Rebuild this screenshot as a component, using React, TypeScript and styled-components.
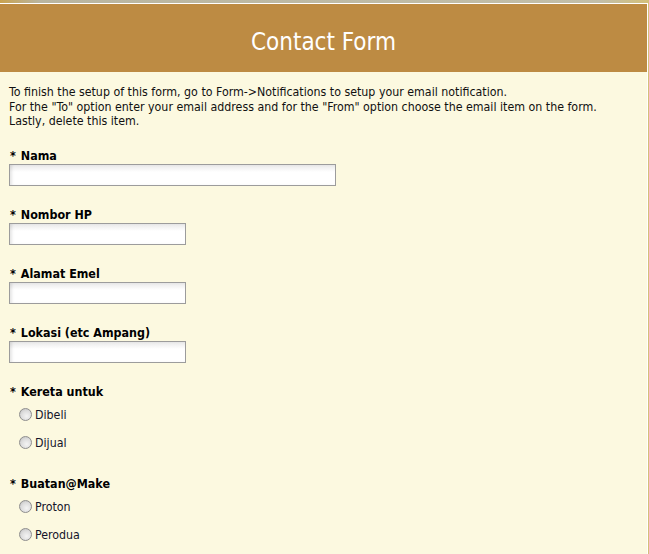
import styled, { createGlobalStyle } from "styled-components";

const GlobalStyle = createGlobalStyle`
  html, body {
    margin: 0;
    padding: 0;
    background: #c7c3ae;
  }
  body {
    font-family: "DejaVu Sans Condensed", "Liberation Sans", sans-serif;
    color: #111;
  }
`;

type Field = { label: string; wide?: boolean };

const textFields: Field[] = [
  { label: "Nama", wide: true },
  { label: "Nombor HP" },
  { label: "Alamat Emel" },
  { label: "Lokasi (etc Ampang)" },
];

const choiceFields = [
  { label: "Kereta untuk", name: "kereta", options: ["Dibeli", "Dijual"] },
  { label: "Buatan@Make", name: "buatan", options: ["Proton", "Perodua"] },
];

function App() {
  return (
    <>
      <GlobalStyle />
      <Window>
        <Frame>
          <Header>Contact Form</Header>
          <Content>
            <Intro>
              To finish the setup of this form, go to Form-&gt;Notifications to setup your email notification.
              <br />
              For the "To" option enter your email address and for the "From" option choose the email item on the form.
              <br />
              Lastly, delete this item.
            </Intro>
            {textFields.map((f) => (
              <FieldBlock key={f.label}>
                <Label>
                  <Star>*</Star>
                  {f.label}
                </Label>
                <TextInput type="text" $wide={f.wide} />
              </FieldBlock>
            ))}
            {choiceFields.map((f) => (
              <FieldBlock key={f.name} $gap={20}>
                <Label>
                  <Star>*</Star>
                  {f.label}
                </Label>
                <Options>
                  {f.options.map((o) => (
                    <Option key={o}>
                      <Radio type="radio" name={f.name} />
                      {o}
                    </Option>
                  ))}
                </Options>
              </FieldBlock>
            ))}
          </Content>
        </Frame>
      </Window>
    </>
  );
}

export default App;

const Window = styled.div`
  height: 554px;
  padding-top: 3px;
  padding-right: 1px;
  box-sizing: border-box;
  background: linear-gradient(90deg, #c9a24f 0px, #b9b5a0 40px, #c2bea8 600px, #d4c079 649px);
  overflow: hidden;
`;

const Frame = styled.div`
  height: 100%;
  border-top: 1px solid #ffffff;
  border-right: 1px solid #ffffff;
  background: #fcf9e0;
`;

const Header = styled.div`
  height: 68px;
  box-sizing: border-box;
  padding-top: 7px;
  background: #bd8b43;
  color: #ffffff;
  font-size: 24px;
  display: flex;
  align-items: center;
  justify-content: center;
`;

const Content = styled.div`
  padding: 13px 9px 0;
`;

const Intro = styled.div`
  font-size: 12.3px;
  line-height: 14.5px;
  margin-bottom: 20px;
`;

const FieldBlock = styled.div<{ $gap?: number }>`
  margin-bottom: ${({ $gap }) => $gap ?? 22}px;
`;

const Label = styled.div`
  font-size: 12.4px;
  font-weight: bold;
  line-height: 14px;
  color: #000;
`;

const Star = styled.span`
  display: inline-block;
  padding-left: 1px;
  margin-right: 5px;
`;

const TextInput = styled.input<{ $wide?: boolean }>`
  display: block;
  margin: 1px 0 0;
  width: ${({ $wide }) => ($wide ? 327 : 177)}px;
  height: 22px;
  box-sizing: border-box;
  border: 1px solid #9c9c9c;
  background: linear-gradient(#e9e9e9, #ffffff 7px);
  box-shadow: inset 3px 0 3px -1px rgba(0, 0, 0, 0.1);
  padding: 2px 4px;
  font-size: 12px;
  outline: none;
`;

const Options = styled.div`
  margin-top: 2px;
`;

const Option = styled.label`
  display: flex;
  align-items: center;
  height: 28px;
  padding-left: 10px;
  font-size: 12.3px;
  color: #14142a;
`;

const Radio = styled.input`
  appearance: none;
  width: 13px;
  height: 13px;
  margin: 0 3px 0 0;
  border-radius: 50%;
  border: 1px solid #8e8e8e;
  box-sizing: border-box;
  background: radial-gradient(circle at 60% 65%, #f4f4f4 0%, #dcdcdc 55%, #b8b8b8 100%);
`;
